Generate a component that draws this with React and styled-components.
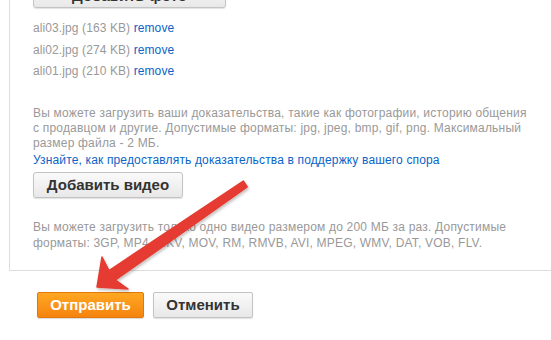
import React from 'react';
import styled, { createGlobalStyle } from 'styled-components';

const GlobalStyle = createGlobalStyle`
  body {
    margin: 0;
    background: #fff;
    font-family: "Liberation Sans", Arial, sans-serif;
    overflow: hidden;
  }
`;

const Page = styled.div`
  position: relative;
  width: 551px;
  height: 340px;
  overflow: hidden;
`;

const Panel = styled.div`
  margin: -18px 0 0 9px;
  width: 580px;
  border-left: 1px solid #ddd;
  border-bottom: 1px solid #ddd;
  padding: 0 0 19px 23px;
  box-sizing: border-box;
`;

const GreyButton = styled.button`
  display: block;
  box-sizing: border-box;
  height: 26px;
  width: ${p => p.$width}px;
  padding: 0;
  border: 1px solid #c3c3c3;
  border-radius: 3px;
  background: linear-gradient(#fafafa, #e8e8e8);
  box-shadow: 0 1px 1px rgba(0, 0, 0, 0.12);
  font-family: "Liberation Sans", Arial, sans-serif;
  font-weight: bold;
  font-size: 15px;
  color: #333;
  cursor: pointer;
`;

const FileList = styled.ul`
  list-style: none;
  margin: 10px 0 0;
  padding: 0;
`;

const FileRow = styled.li`
  font-size: 12px;
  letter-spacing: 0.1px;
  line-height: 21.5px;
  color: #999;
`;

const Link = styled.a`
  color: #0a64c8;
  text-decoration: none;
  cursor: pointer;
`;

// line breaks are fixed where the original page wraps them
const Hint = styled.p`
  margin: ${p => p.$top}px 0 0;
  width: 515px;
  white-space: nowrap;
  font-size: 12px;
  letter-spacing: 0.2px;
  line-height: ${p => p.$lh}px;
  color: #999;
`;

const HelpLink = styled(Link)`
  display: block;
  margin: 2px 0 4px;
  font-size: 12px;
  letter-spacing: 0.15px;
  line-height: 15px;
`;

const Actions = styled.div`
  display: flex;
  gap: 9px;
  padding: 21px 0 0 37px;
`;

const SubmitButton = styled.button`
  box-sizing: border-box;
  height: 26px;
  width: 107px;
  padding: 0;
  border: 1px solid #e0780e;
  border-radius: 2px;
  background: linear-gradient(#ffa722, #f5840f);
  box-shadow: 0 1px 1px rgba(0, 0, 0, 0.15);
  font-family: "Liberation Sans", Arial, sans-serif;
  font-weight: bold;
  font-size: 15px;
  color: #fff;
  cursor: pointer;
`;

const CancelButton = styled(GreyButton)`
  border-radius: 2px;
`;

const ArrowLayer = styled.svg`
  position: absolute;
  left: 0;
  top: 0;
  pointer-events: none;
`;

const files = [
  { name: 'ali03.jpg', size: '163 KB' },
  { name: 'ali02.jpg', size: '274 KB' },
  { name: 'ali01.jpg', size: '210 KB' },
];

export default function App() {
  return (
    <Page>
      <GlobalStyle />
      <Panel>
        <GreyButton $width={193}>Добавить фото</GreyButton>
        <FileList>
          {files.map(f => (
            <FileRow key={f.name}>
              {f.name} ({f.size}) <Link>remove</Link>
            </FileRow>
          ))}
        </FileList>
        <Hint $top={23} $lh={15}>
          Вы можете загрузить ваши доказательства, такие как фотографии, историю общения<br />
          с продавцом и другие. Допустимые форматы: jpg, jpeg, bmp, gif, png. Максимальный<br />
          размер файла - 2 МБ.
        </Hint>
        <HelpLink>Узнайте, как предоставлять доказательства в поддержку вашего спора</HelpLink>
        <GreyButton $width={150}>Добавить видео</GreyButton>
        <Hint $top={21} $lh={16}>
          Вы можете загрузить только одно видео размером до 200 МБ за раз. Допустимые<br />
          форматы: 3GP, MP4, MKV, MOV, RM, RMVB, AVI, MPEG, WMV, DAT, VOB, FLV.
        </Hint>
      </Panel>
      <Actions>
        <SubmitButton>Отправить</SubmitButton>
        <CancelButton $width={100}>Отменить</CancelButton>
      </Actions>
      <ArrowLayer width="551" height="340" viewBox="0 0 551 340">
        <defs>
          <filter id="shadow" x="-20%" y="-20%" width="140%" height="140%">
            <feDropShadow dx="1" dy="2" stdDeviation="1.5" floodColor="#000" floodOpacity="0.25" />
          </filter>
        </defs>
        <polygon
          points="97,287 102,257 109,270.5 243.3,181 247.2,187 115.5,280 128,289"
          fill="#e53b30"
          stroke="#e53b30"
          strokeWidth="1.5"
          strokeLinejoin="round"
          filter="url(#shadow)"
        />
      </ArrowLayer>
    </Page>
  );
}
